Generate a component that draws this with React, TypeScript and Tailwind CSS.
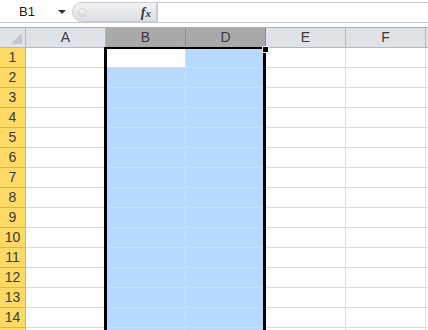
import React from "react";

const cols = ["A", "B", "D", "E", "F"];
const rows = Array.from({ length: 15 }, (_, i) => i + 1);

export default function App() {
  return (
    <div
      className="relative w-[428px] h-[330px] overflow-hidden bg-white text-[#222]"
      style={{ fontFamily: '"Liberation Sans", Arial, sans-serif' }}
    >
      {/* formula bar */}
      <div className="flex h-[23px] items-stretch border-b border-[#c5c9cf] bg-white">
        <div className="flex w-[72px] items-center pl-[19px] pr-[6px] pt-[2px]">
          <span className="flex-1 text-[13px] text-[#1a1a1a]">B1</span>
          <svg width="8" height="5" viewBox="0 0 8 5">
            <path d="M0 0 L8 0 L4 4 Z" fill="#333" />
          </svg>
        </div>
        <div className="mt-[2px] flex w-[85px] items-center rounded-l-[11px] border border-[#c8ccd2] bg-gradient-to-b from-[#f2f3f5] to-[#dcdfe3]">
          <div className="ml-[5px] h-[9px] w-[9px] rounded-full bg-gradient-to-b from-[#f5f5f5] to-[#d6d8db] border border-[#d0d3d7]" />
          <span
            className="ml-auto mr-[5px] text-[14px] italic font-bold text-[#333]"
            style={{ fontFamily: '"Liberation Serif", serif' }}
          >
            f<span className="text-[11px]">x</span>
          </span>
        </div>
        <div className="mt-[2px] flex-1 border-l border-t border-[#c8ccd2] bg-white" />
      </div>
      <div className="h-[5px] border-b border-[#a9aeb4] bg-white" />

      {/* grid */}
      <div className="grid grid-cols-[26px_80px_80px_80px_80px_80px_20px]">
        {/* header row */}
        <div className="relative h-[20px] border-b border-r border-[#b4b9bf] bg-[#dfe3e8]">
          <div
            className="absolute bottom-[3px] right-[3px] h-[11px] w-[11px] bg-[#c2c6cb]"
            style={{ clipPath: "polygon(100% 0, 100% 100%, 0 100%)" }}
          />
        </div>
        {cols.map((c) => {
          const sel = c === "B" || c === "D";
          return (
            <div
              key={c}
              className={
                sel
                  ? "flex h-[20px] items-center justify-center border-b border-r border-[#8c8c8c] bg-[#a9a9a9] text-[14px] text-[#3a3a3a]"
                  : "flex h-[20px] items-center justify-center border-b border-r border-[#b4b9bf] bg-[#dfe3e8] text-[14px] text-[#3a3a3a]"
              }
            >
              {c}
            </div>
          );
        })}
        <div className="h-[20px] border-b border-[#b4b9bf] bg-[#dfe3e8]" />

        {rows.map((r) => (
          <React.Fragment key={r}>
            <div className="flex h-[20px] items-center justify-center border-b border-r border-[#e2b24f] bg-[#fdd965] text-[14px] text-[#3a3a3a]">
              {r <= 14 ? r : ""}
            </div>
            {cols.map((c) => {
              const blue = (c === "B" && r !== 1) || c === "D";
              return (
                <div
                  key={c}
                  className={
                    blue
                      ? "h-[20px] border-b border-r border-[#d6dde4] bg-[#b6d9fd]"
                      : "h-[20px] border-b border-r border-[#dadcdd] bg-white"
                  }
                />
              );
            })}
            <div className="h-[20px] border-b border-[#dadcdd] bg-white" />
          </React.Fragment>
        ))}
      </div>

      {/* selection outline */}
      <div className="pointer-events-none absolute left-[104px] top-[47px] h-[300px] w-[162px] border-l-[3px] border-r-[3px] border-t-[2px] border-black" />
      <div className="pointer-events-none absolute left-[262px] top-[46px] h-[7px] w-[7px] bg-black border border-white" />
    </div>
  );
}
